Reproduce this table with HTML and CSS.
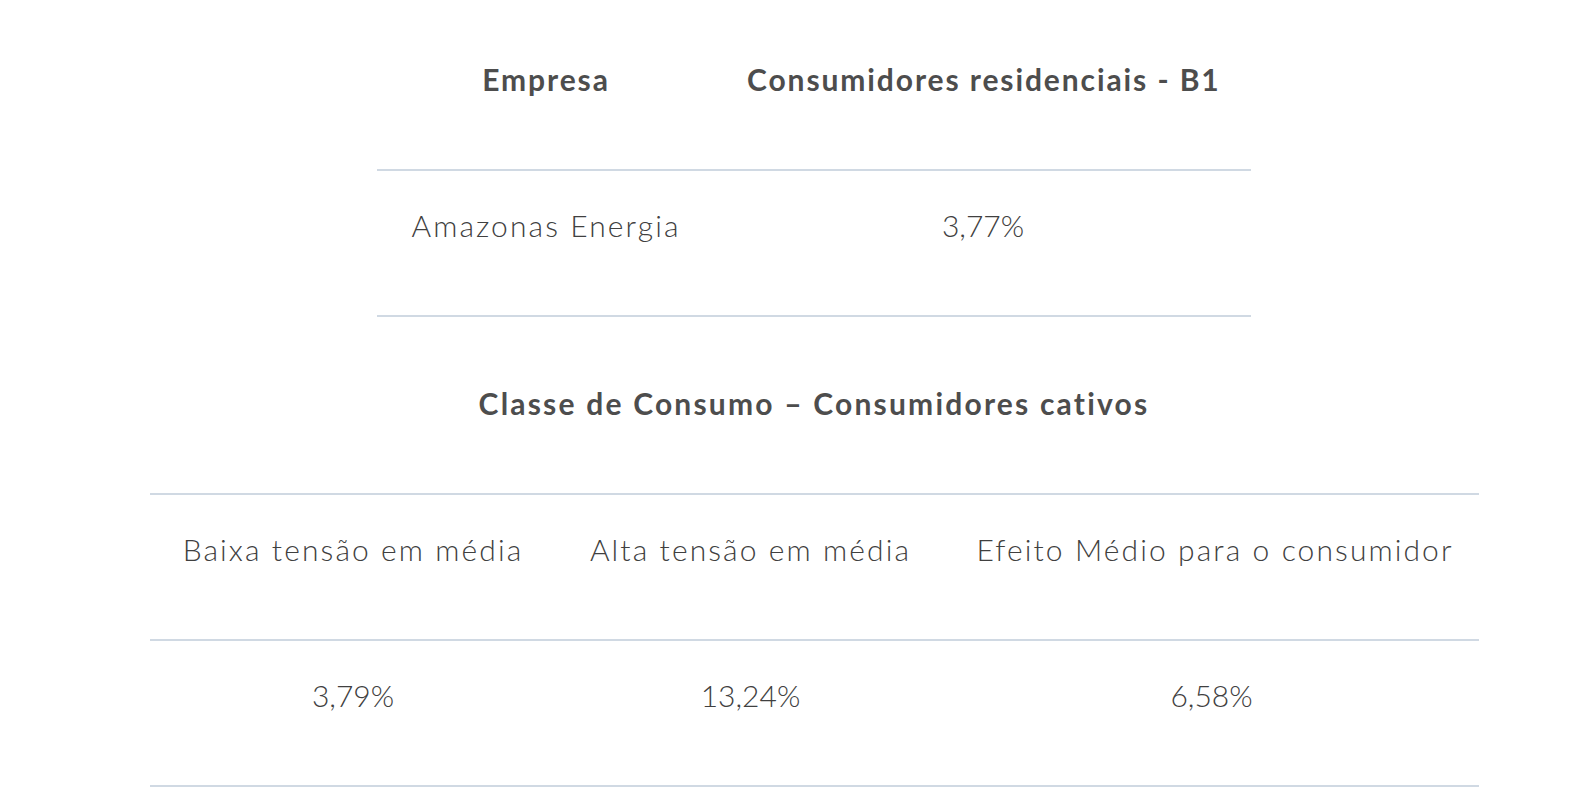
FILE: index.html
```html
<!DOCTYPE html>
<html lang="pt-BR">
<head>
<meta charset="utf-8">
<title>Reajuste tarifário</title>
<link rel="stylesheet" href="styles.css">
</head>
<body>
<main class="content">
  <table class="tbl tbl-company">
    <colgroup><col class="c-company"><col class="c-b1"></colgroup>
    <thead>
      <tr><th>Empresa</th><th>Consumidores residenciais - B1</th></tr>
    </thead>
    <tbody>
      <tr><td>Amazonas Energia</td><td class="num">3,77%</td></tr>
    </tbody>
  </table>
  <table class="tbl tbl-class">
    <colgroup><col class="c-low"><col class="c-high"><col class="c-avg"></colgroup>
    <thead>
      <tr><th colspan="3" class="caption">Classe de Consumo – Consumidores cativos</th></tr>
    </thead>
    <tbody>
      <tr><td>Baixa tensão em média</td><td>Alta tensão em média</td><td>Efeito Médio para o consumidor</td></tr>
      <tr><td class="num">3,79%</td><td class="num">13,24%</td><td class="num">6,58%</td></tr>
    </tbody>
  </table>
</main>
</body>
</html>
```
FILE: styles.css
```css
html, body {
  margin: 0;
  padding: 0;
  background: #ffffff;
}
body {
  font-family: "Lato", "Open Sans", sans-serif;
  color: #505050;
}
.content {
  display: flex;
  flex-direction: column;
  align-items: center;
  padding: 25px 0 0 50px;
}
.tbl {
  border-collapse: collapse;
  table-layout: fixed;
}
.tbl th,
.tbl td {
  font-size: 30px;
  line-height: 36px;
  padding: 36px 32px 72px;
  text-align: center;
  border-bottom: 2px solid #d0d9e3;
  white-space: nowrap;
}
.tbl th {
  font-weight: 700;
  color: #4d4d4d;
  letter-spacing: 1.9px;
}
.tbl th.caption {
  letter-spacing: 2.2px;
}
.tbl td {
  font-weight: 300;
  color: #404040;
  letter-spacing: 2.1px;
}
.tbl td.num {
  letter-spacing: 0;
}
.tbl-company {
  width: 874px;
  margin-bottom: 32px;
}
.c-company { width: 338px; }
.c-b1 { width: 536px; }
.tbl-class {
  width: 1329px;
}
.c-low { width: 407px; }
.c-high { width: 388px; }
.c-avg { width: 534px; }
```
